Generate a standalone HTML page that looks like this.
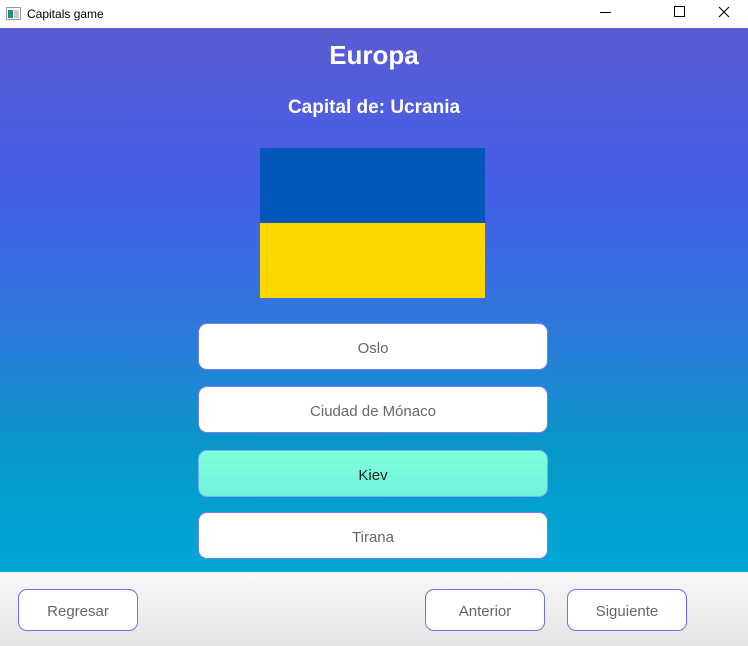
<!DOCTYPE html>
<html><head><style>
*{margin:0;padding:0;box-sizing:border-box}
body{width:748px;height:646px;position:relative;font-family:"Liberation Sans",sans-serif;overflow:hidden;background:#fff}
.tb{position:absolute;top:0;left:0;width:748px;height:28px;background:#fff;font-size:12px}
.tb .t{position:absolute;left:27px;top:7px;color:#000}
.main{position:absolute;top:28px;left:0;width:748px;height:544px;background:linear-gradient(#5a5cd2 0%,#455ee8 30%,#2f78dc 55%,#0698c8 78%,#00a8d6 100%)}
.h1{position:absolute;top:40px;width:748px;text-align:center;color:#fff;font-size:26px;font-weight:bold}
.h2{position:absolute;top:97px;width:748px;text-align:center;color:#fff;font-size:19px;font-weight:bold}
.opt{position:absolute;left:198px;width:350px;height:47px;background:#fff;border:1.5px solid #7a7cf0;border-radius:9px;display:flex;align-items:center;justify-content:center;padding-top:3px;font-size:15px;color:#666}
.foot{position:absolute;top:572px;left:0;width:748px;height:74px;background:linear-gradient(#f7f7f7,#e5e5e5)}
.fb{position:absolute;top:589px;width:120px;height:42px;background:#fff;border:1.5px solid #6d6ff5;border-radius:9px;display:flex;align-items:center;justify-content:center;padding-top:3px;font-size:15px;color:#666}
</style></head><body>
<div class="tb"><svg style="position:absolute;left:6px;top:7px" width="15" height="13"><rect x="0.5" y="0.5" width="14" height="12" fill="#fff" stroke="#999"/><rect x="2" y="3" width="5" height="8" fill="#2a8a8a"/><rect x="8" y="3" width="5" height="8" fill="#ccc"/></svg><span class="t">Capitals game</span>
<svg style="position:absolute;left:600px;top:0" width="148" height="28"><line x1="0" y1="12.5" x2="11" y2="12.5" stroke="#000"/><rect x="74.5" y="6.5" width="10" height="10" fill="none" stroke="#000"/><path d="M119 7 L129 17 M129 7 L119 17" stroke="#000"/></svg></div>
<div class="main"></div>
<div class="h1">Europa</div>
<div class="h2">Capital de: Ucrania</div>
<div style="position:absolute;left:260px;top:148px;width:225px;height:75px;background:#0057b8"></div>
<div style="position:absolute;left:260px;top:223px;width:225px;height:75px;background:#ffd700"></div>
<div class="opt" style="top:323px">Oslo</div>
<div class="opt" style="top:386px">Ciudad de Mónaco</div>
<div class="opt" style="top:450px;background:linear-gradient(#80ffdc,#72f0dc);color:#222;border-color:#7ab0f0">Kiev</div>
<div class="opt" style="top:512px">Tirana</div>
<div class="foot"></div>
<div class="fb" style="left:18px">Regresar</div>
<div class="fb" style="left:425px">Anterior</div>
<div class="fb" style="left:567px">Siguiente</div>
</body></html>
